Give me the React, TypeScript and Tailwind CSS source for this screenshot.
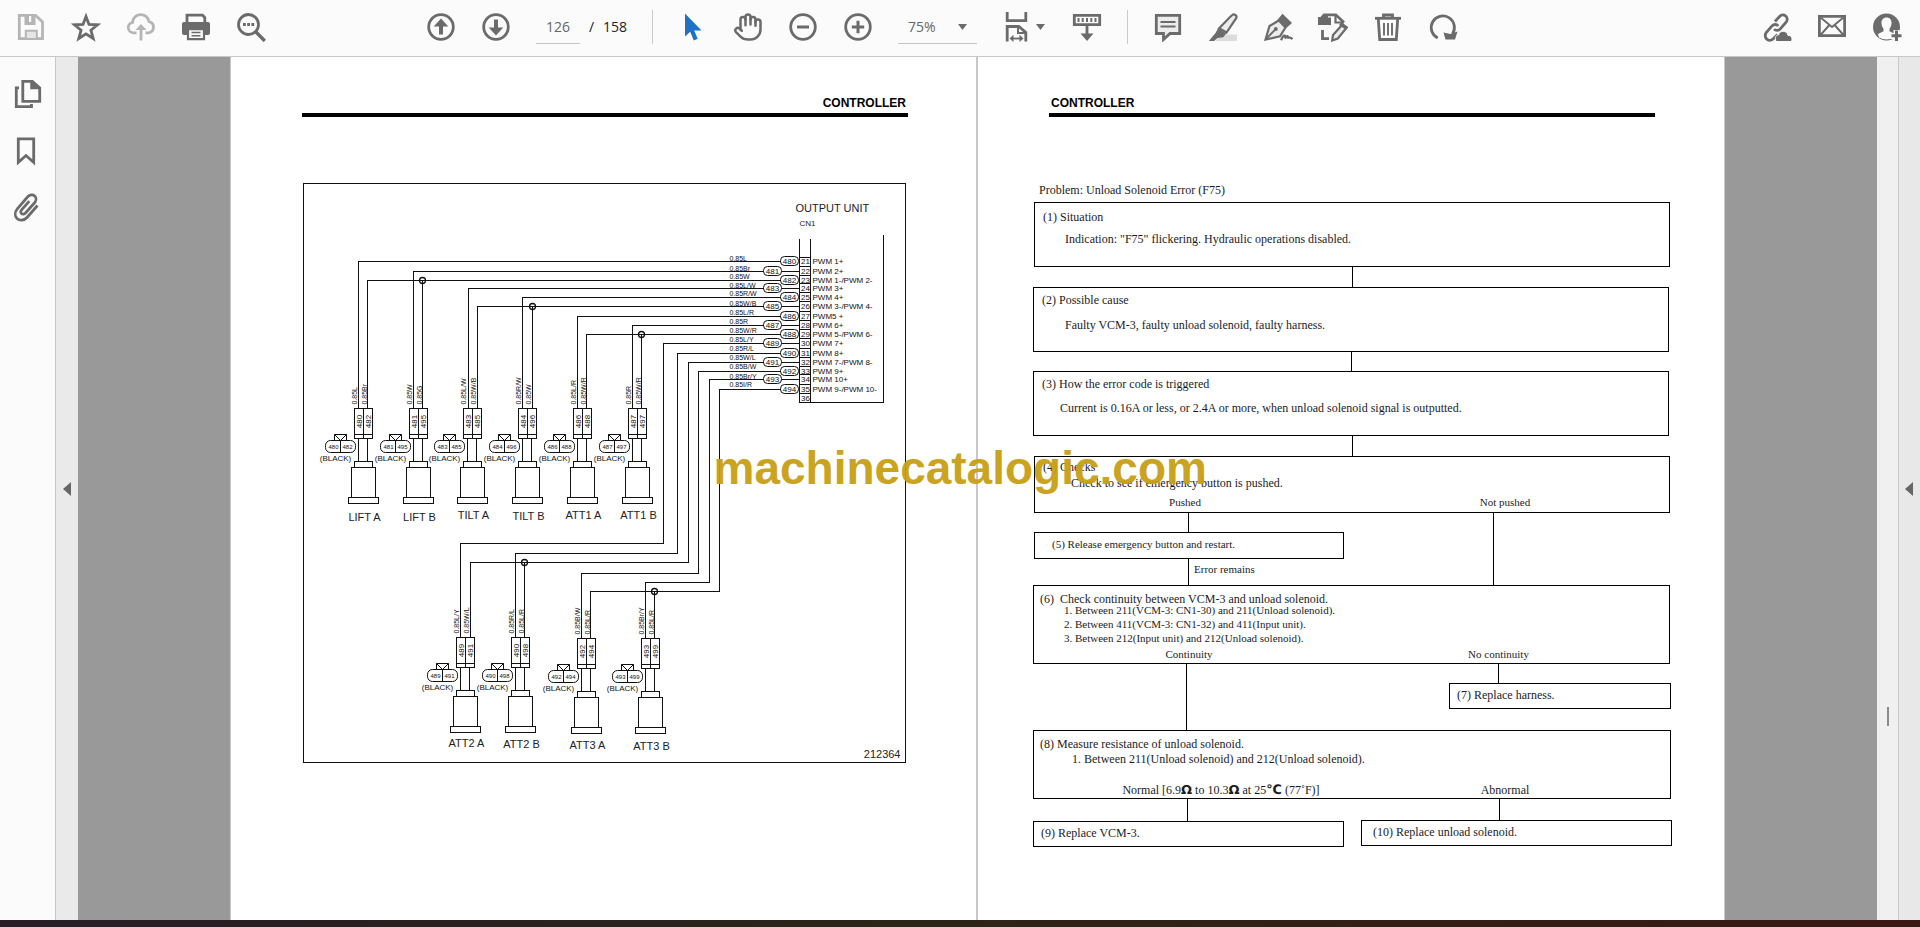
import type { ReactNode } from 'react';
import { Hand } from 'lucide-react';

interface IconButtonProps {
  label: string;
  children: ReactNode;
  className?: string;
}

function IconButton({ label, children, className = 'text-[#6b6b6b]' }: IconButtonProps) {
  return (
    <button type="button" aria-label={label} title={label} className={`flex h-[30px] w-[30px] shrink-0 items-center justify-center ${className}`}>
      {children}
    </button>
  );
}

function Icon({ children }: { children: ReactNode }) {
  return (
    <svg viewBox="0 0 30 30" className="h-[30px] w-[30px]" fill="none" stroke="currentColor" strokeWidth="2.8" aria-hidden="true">
      {children}
    </svg>
  );
}

function Caret() {
  return (
    <svg viewBox="0 0 9 6" className="h-[6px] w-[9px] fill-[#6b6b6b]" aria-hidden="true">
      <path d="M0 0h9L4.5 6z" />
    </svg>
  );
}

function Toolbar() {
  return (
    <header className="flex h-[57px] shrink-0 items-center border-b border-[#c8c8c8] bg-[#fbfbfb] pr-[18px] pb-[2px] pl-4">
      <div className="flex items-center gap-[25px]">
        <IconButton label="Save" className="text-[#b5b5b5]">
          <Icon>
            <path d="M3.3 3.3h16.2l7 6.6v16.8H3.3z" />
            <path d="M8.5 4h11v9h-11z" fill="currentColor" stroke="none" />
            <path d="M13 4h2.2v6H13z" fill="#fbfbfb" stroke="none" />
            <path d="M9.8 26v-7.2h11V26" fill="#e6e6e6" strokeWidth="2" />
          </Icon>
        </IconButton>
        <IconButton label="Star">
          <Icon>
            <path d="M15 4.500l3 7.900 8.600.400-6.700 5.400 2.300 8.300-7.200-4.700-7.200 4.700 2.300-8.300-6.700-5.400 8.600-.400z" />
          </Icon>
        </IconButton>
        <IconButton label="Upload to cloud" className="text-[#b5b5b5]">
          <Icon>
            <path d="M10.500 20.800H7.300a5.200 5.200 0 0 1-.8-10.300A8.300 8.300 0 0 1 23 9.600a5.700 5.700 0 0 1-.3 11.200h-3.200" />
            <path d="M15 28.500V16" />
            <path d="M15 12l5.500 6h-11z" fill="currentColor" stroke="none" />
          </Icon>
        </IconButton>
        <IconButton label="Print">
          <Icon>
            <path d="M6 11V3.200h15.500L23.800 5.500V11" />
            <path d="M3 10h24a2 2 0 0 1 2 2v9a2 2 0 0 1-2 2H3a2 2 0 0 1-2-2v-9a2 2 0 0 1 2-2z" fill="currentColor" stroke="none" />
            <path d="M7 17.200h16v10H7z" fill="#fbfbfb" strokeWidth="2.200" />
            <path d="M10.500 20.500h9M10.500 23.800h9" strokeWidth="1.600" />
          </Icon>
        </IconButton>
        <IconButton label="Find text">
          <Icon>
            <circle cx="12.500" cy="12.500" r="10" />
            <path d="M19.500 19.500l9.300 9.500" strokeWidth="3.400" />
            <path d="M7 12.500h2.800M11.200 12.500h2.800M15.400 12.500h2.800" />
          </Icon>
        </IconButton>
      </div>

      <div className="ml-40 flex items-center gap-[25px]">
        <IconButton label="Previous page">
          <Icon>
            <circle cx="15" cy="15" r="12.300" />
            <path d="M15 6.500l7.300 8h-5.300v8h-4v-8H7.700z" fill="currentColor" stroke="none" />
          </Icon>
        </IconButton>
        <IconButton label="Next page">
          <Icon>
            <circle cx="15" cy="15" r="12.300" />
            <path d="M15 23.500l7.300-8h-5.300v-8h-4v8H7.700z" fill="currentColor" stroke="none" />
          </Icon>
        </IconButton>
        <div className="flex items-center gap-[9px] text-sm">
          <input aria-label="Page number" defaultValue="126" className="h-[34px] w-11 border-b border-[#c4c4c4] bg-transparent text-center text-[#666] outline-none" />
          <span className="flex w-[38px] justify-between text-[#222]">
            <span>/</span>
            <span>158</span>
          </span>
        </div>
        <div className="h-[34px] w-px bg-[#c9c9c9]" />
        <IconButton label="Select tool" className="text-[#1f70c8]">
          <Icon>
            <path d="M7 1.500v23l5.200-4.700 3.600 8.600 3.900-1.700-3.500-8.200H23.500z" fill="currentColor" stroke="none" />
          </Icon>
        </IconButton>
        <IconButton label="Hand tool">
          <Hand size={30} strokeWidth={2} />
        </IconButton>
        <IconButton label="Zoom out">
          <Icon>
            <circle cx="15" cy="15" r="12.300" />
            <path d="M9 15h12" strokeWidth="3" />
          </Icon>
        </IconButton>
        <IconButton label="Zoom in">
          <Icon>
            <circle cx="15" cy="15" r="12.300" />
            <path d="M8.800 15h12.400M15 8.800v12.400" strokeWidth="3" />
          </Icon>
        </IconButton>
        <div className="relative flex w-[79px] items-center border-b border-[#c4c4c4]">
          <select aria-label="Zoom level" defaultValue="75%" className="h-[33px] w-full appearance-none bg-transparent pl-2.5 text-sm text-[#666] outline-none">
            <option>50%</option>
            <option>75%</option>
            <option>100%</option>
          </select>
          <span className="pointer-events-none absolute right-2.5">
            <Caret />
          </span>
        </div>
        <button type="button" aria-label="Page display" className="flex w-[45px] items-center gap-1 text-[#6b6b6b]">
          <Icon>
            <path d="M5.200 0v8.700h18.600V0" />
            <path d="M5.200 29.500V14.500h11.600l7 6v9" />
            <path d="M16 14.500v6.500h7.500" strokeWidth="2" />
            <path d="M9 26.500h11" strokeWidth="1.800" />
            <path d="M11.500 22.700v7.300L7.500 26.400zM17.500 22.700v7.300l4-3.600z" fill="currentColor" stroke="none" />
          </Icon>
          <Caret />
        </button>
        <IconButton label="Scrolling mode">
          <Icon>
            <path d="M2.300 3.300h25.400v9.400H2.300z" />
            <path d="M6.500 6v4M10.700 6v4M15 6v4M19.300 6v4M23.500 6v4" strokeWidth="2" />
            <path d="M15 13v10" />
            <path d="M8.500 21.500h13L15 29z" fill="currentColor" stroke="none" />
          </Icon>
        </IconButton>
        <div className="h-[34px] w-px bg-[#c9c9c9]" />
        <IconButton label="Add comment">
          <Icon>
            <path d="M3.300 3.300h23.400v18.200H17l-6.500 6v-6H3.300z" fill="#ececec" />
            <path d="M7.500 10h15M7.500 14.500h15" strokeWidth="2" />
          </Icon>
        </IconButton>
        <IconButton label="Highlight text">
          <Icon>
            <path d="M13 22.500h16V29H7z" fill="#dcdcdc" stroke="none" />
            <path d="M24 3.300c2-2 5.500.2 4.200 2.900L18.500 20.500l-7.300-4.200C15.500 12 20 7 24 3.300z" fill="#ececec" strokeWidth="2.200" />
            <path d="M10 16.500L18.300 21.300l-3 4-5.800.7L6 29H.8l6.700-8z" fill="currentColor" stroke="none" />
          </Icon>
        </IconButton>
        <IconButton label="Sign">
          <Icon>
            <path d="M2.500 27.500L6.500 14l9.300-5.500 6.700 7-5.500 8.800z" fill="#ececec" strokeWidth="2.200" />
            <path d="M2.500 27.500l9.500-9.700" strokeWidth="1.800" />
            <circle cx="12.800" cy="17" r="2" fill="currentColor" stroke="none" />
            <path d="M14.500 7.800l5-6L29 11l-6 5.200z" fill="currentColor" stroke="none" />
            <path d="M18 28.300c2.500-5.500 4.500-6.500 4.300-1.800 1.600-3.500 2.800-3 2.800 0 .8-1.600 2.400-1.300 4.400.6" strokeWidth="2.200" />
          </Icon>
        </IconButton>
        <IconButton label="Edit document">
          <Icon>
            <path d="M4.500 18v8.700H11M10 2.800h7.800L26 10.500" />
            <path d="M5.500 1.500H10v4h3V13H0V5h2.500z" fill="currentColor" stroke="none" />
            <path d="M17.500 3v7.500H26" strokeWidth="2.200" />
            <path d="M24.500 12.500l4.300 3-9 11-5.600 2 .8-5.500z" fill="#ececec" strokeWidth="2.200" />
            <path d="M23 10.500l6.800 4.500-2 2.800-6.800-4.800z" fill="currentColor" stroke="none" />
          </Icon>
        </IconButton>
        <IconButton label="Delete">
          <Icon>
            <path d="M2 6.300h26" />
            <path d="M10.500 6V3h9v3" />
            <path d="M5.300 7l1.400 20.500h16.600L24.700 7" />
            <path d="M11 11v12.500M15 11v12.500M19 11v12.500" strokeWidth="1.900" />
          </Icon>
        </IconButton>
        <IconButton label="Rotate">
          <Icon>
            <path d="M9.700 26A11.600 11.600 0 1 1 24.500 22" />
            <path d="M15.500 20.500l7 1.500 7-2.500-2.500 8H17.500z" fill="currentColor" stroke="none" />
          </Icon>
        </IconButton>
      </div>

      <div className="ml-auto flex items-center gap-[25px]">
        <IconButton label="Copy link">
          <Icon>
            <path d="M13 9.500l4.800-5.300a4.300 4.300 0 0 1 6.500 5.600l-6 7a4.200 4.200 0 0 1-6.300.3" />
            <path d="M15.500 22.500l-3.800 3.900a4.700 4.700 0 0 1-7.500-5.700l5.600-6.500a4.200 4.200 0 0 1 6.500-.3" />
            <path d="M14 29.500c-1.500-4 0-7 2.500-6.500 1-5 8.500-5 9.500.5 4-.5 5 4.500 3 6z" fill="currentColor" stroke="#fbfbfb" strokeWidth="1" />
          </Icon>
        </IconButton>
        <IconButton label="Send by email">
          <Icon>
            <path d="M2.400 4.400h25.200v19.200H2.400z" />
            <path d="M3 5l12 10L27 5M3 23.500l9-10M27 23.500l-9-10" strokeWidth="1.900" />
          </Icon>
        </IconButton>
        <IconButton label="Add people">
          <Icon>
            <circle cx="14.500" cy="15" r="13.500" fill="currentColor" stroke="none" />
            <path d="M14.500 5.500c3.600 0 5.300 2.700 5 6-.2 2.400-1 4-2 5.200v2.500l5.500 2.800-1 3.500c-4.500 2.500-10.500 2.500-15 0L6 22l5.500-2.800v-2.500c-1-1.200-1.800-2.800-2-5.200-.3-3.300 1.400-6 5-6z" fill="#fbfbfb" stroke="none" />
            <path d="M24.500 18v12M18.500 24h12" stroke="#fbfbfb" strokeWidth="6" />
            <path d="M24.500 18.500V29M19.500 23.800h10" strokeWidth="3" />
          </Icon>
        </IconButton>
      </div>
    </header>
  );
}

function Sidebar() {
  return (
    <nav className="flex w-14 shrink-0 flex-col items-center gap-[27px] border-r border-[#c8c8c8] bg-[#fbfbfb] pt-[22px]">
      <IconButton label="Page thumbnails">
        <Icon>
          <path d="M9.800 2.300h9.600l7.300 6.500v13.500H9.800z" />
          <path d="M18 3v6.500h8z" fill="currentColor" strokeWidth="1.500" />
          <path d="M6 8.800H3.300v18.900h15.200V25" />
        </Icon>
      </IconButton>
      <IconButton label="Bookmarks">
        <Icon>
          <path d="M5.300 2.800h15.400v23.500L13 19.500l-7.700 6.800z" />
        </Icon>
      </IconButton>
      <IconButton label="Attachments">
        <Icon>
          <path d="M24.500 12.500L14 24.500c-3 3.300-7.500 3.500-10 1-2.600-2.600-2-6.800.5-9.800L14.500 4c2.200-2.400 5.300-2.800 7.200-1 2 1.900 1.500 4.900-.3 7L12.500 20c-1.300 1.400-3 1.600-4 .6-1.100-1.100-.8-2.700.3-4l7.500-8.500" strokeWidth="2.700" />
        </Icon>
      </IconButton>
    </nav>
  );
}

// wires from the CN1 connector, top to bottom
interface Wire {
  y: number;
  color: string;
  labelY: number;
  no: string;
  pin: string;
  signal: string;
}

const wires: Wire[] = [
  { y: 261, color: '0.85L', labelY: 260, no: '480', pin: '21', signal: 'PWM 1+' },
  { y: 271, color: '0.85Br', labelY: 270, no: '481', pin: '22', signal: 'PWM 2+' },
  { y: 280, color: '0.85W', labelY: 278, no: '482', pin: '23', signal: 'PWM 1-/PWM 2-' },
  { y: 288, color: '0.85L/W', labelY: 287, no: '483', pin: '24', signal: 'PWM 3+' },
  { y: 297, color: '0.85R/W', labelY: 295, no: '484', pin: '25', signal: 'PWM 4+' },
  { y: 306, color: '0.85W/B', labelY: 305, no: '485', pin: '26', signal: 'PWM 3-/PWM 4-' },
  { y: 316, color: '0.85L/R', labelY: 314, no: '486', pin: '27', signal: 'PWM5 +' },
  { y: 325, color: '0.85R', labelY: 323, no: '487', pin: '28', signal: 'PWM 6+' },
  { y: 334, color: '0.85W/R', labelY: 332, no: '488', pin: '29', signal: 'PWM 5-/PWM 6-' },
  { y: 343, color: '0.85L/Y', labelY: 341, no: '489', pin: '30', signal: 'PWM 7+' },
  { y: 353, color: '0.85R/L', labelY: 350, no: '490', pin: '31', signal: 'PWM 8+' },
  { y: 362, color: '0.85W/L', labelY: 359, no: '491', pin: '32', signal: 'PWM 7-/PWM 8-' },
  { y: 371, color: '0.85B/W', labelY: 368, no: '492', pin: '33', signal: 'PWM 9+' },
  { y: 379, color: '0.85Br/Y', labelY: 378, no: '493', pin: '34', signal: 'PWM 10+' },
  { y: 389, color: '0.85I/R', labelY: 386, no: '494', pin: '35', signal: 'PWM 9-/PWM 10-' },
];

// start x of each run, then where it goes
const routes = [
  'M358 408V261H780',
  'M413 408V271H763',
  'M367 408V280H780M422 280V408',
  'M468 408V288H763',
  'M522 408V297H780',
  'M477 408V306H763M532 306V408',
  'M577 408V316H780',
  'M632 408V325H763',
  'M586 408V334H780M641 334V408',
  'M460 637V543H663V343H763',
  'M515 637V553H677V353H780',
  'M470 637V562H688V362H763M524 562V637',
  'M581 638V573H698V371H780',
  'M645 638V582H709V379H763',
  'M590 638V591H719V389H780M654 591V638',
];

const junctions = [[422, 280], [532, 306], [641, 334], [524, 562], [654, 591]];

interface Solenoid {
  name: string;
  x: number;
  y: number;
  nameY: number;
  pins: [string, string];
  colors: [string, string];
}

const solenoids: Solenoid[] = [
  { name: 'LIFT A', x: 363, y: 408, nameY: 520, pins: ['480', '482'], colors: ['0.85L', '0.85Br'] },
  { name: 'LIFT B', x: 418, y: 408, nameY: 520, pins: ['481', '495'], colors: ['0.85W', '0.85G'] },
  { name: 'TILT A', x: 472, y: 408, nameY: 518, pins: ['483', '485'], colors: ['0.85L/W', '0.85W/B'] },
  { name: 'TILT B', x: 527, y: 408, nameY: 519, pins: ['484', '496'], colors: ['0.85R/W', '0.85W'] },
  { name: 'ATT1 A', x: 582, y: 408, nameY: 518, pins: ['486', '488'], colors: ['0.85L/R', '0.85W/R'] },
  { name: 'ATT1 B', x: 637, y: 408, nameY: 518, pins: ['487', '497'], colors: ['0.85R', '0.85W/R'] },
  { name: 'ATT2 A', x: 465, y: 637, nameY: 746, pins: ['489', '491'], colors: ['0.85L/Y', '0.85W/L'] },
  { name: 'ATT2 B', x: 520, y: 637, nameY: 747, pins: ['490', '498'], colors: ['0.85R/L', '0.85L/R'] },
  { name: 'ATT3 A', x: 586, y: 638, nameY: 748, pins: ['492', '494'], colors: ['0.85B/W', '0.85L/R'] },
  { name: 'ATT3 B', x: 650, y: 638, nameY: 749, pins: ['493', '499'], colors: ['0.85Br/Y', '0.85L/R'] },
];

function SolenoidSymbol({ x, y, name, nameY, pins, colors }: Solenoid) {
  return (
    <g>
      <g transform={`translate(${x} ${y})`}>
        <g fill="none" stroke="#111" shapeRendering="crispEdges">
          <path d="M-9 0h18v30h-18zM0 0v30M-9 26h18" />
          <path d="M-5 30v23M4 30v23" />
          <path d="M-9 53h18v6h-18zM-12 59h24v30h-24zM-15 89h30v6h-30z" />
        </g>
        <g fill="none" stroke="#111">
          <rect x="-38" y="32" width="30" height="12" rx="5" />
          <path d="M-23 32v12M-29 26h12v6h-12zM-29 26l6 6 6-6" />
        </g>
        <g fill="#111">
          <text x="-30" y="40" fontSize="6" textAnchor="middle">{pins[0]}</text>
          <text x="-16" y="40" fontSize="6" textAnchor="middle">{pins[1]}</text>
          <text x="-28" y="52" fontSize="8" textAnchor="middle">(BLACK)</text>
          <text transform="translate(-2 13) rotate(-90)" fontSize="8" textAnchor="middle">{pins[0]}</text>
          <text transform="translate(7 13) rotate(-90)" fontSize="8" textAnchor="middle">{pins[1]}</text>
          <text transform="translate(-7 -4) rotate(-90)" fontSize="7">{colors[0]}</text>
          <text transform="translate(3 -4) rotate(-90)" fontSize="7">{colors[1]}</text>
        </g>
      </g>
      <text x={x + 1} y={nameY} fontSize="11" textAnchor="middle" fill="#222">{name}</text>
    </g>
  );
}

function WiringDiagram() {
  return (
    <svg viewBox="303.5 183.5 601 578" className="block h-auto w-full font-['Liberation_Sans',Arial,sans-serif]" role="img" aria-label="Output unit wiring">
      <text x="795" y="211" fontSize="11" fill="#222">OUTPUT UNIT</text>
      <text x="799" y="225" fontSize="8" fill="#222">CN1</text>

      <g fill="none" stroke="#111" shapeRendering="crispEdges">
        {routes.map((d) => (
          <path key={d} d={d} />
        ))}
        <path d="M799 238V402H883V234M810 238V402" />
        <path d="M799 257h11M799 393h11" />
      </g>

      {junctions.map(([x, y]) => (
        <circle key={x} cx={x} cy={y} r="3" fill="none" stroke="#111" strokeWidth="1.3" />
      ))}

      {wires.map((w, i) => {
        const left = i % 2 === 0 ? 780 : 763;
        return (
          <g key={w.no}>
            <g fill="none" stroke="#111">
              {i % 2 === 1 && <path d={`M781 ${w.y}H799`} />}
              <rect x={left} y={w.y - 5} width="18" height="9" rx="4" />
              {i > 0 && <path d={`M799 ${w.y - 5}h11`} />}
            </g>
            <g fill="#111" fontSize="8">
              <text x={left + 9} y={w.y + 2} textAnchor="middle">{w.no}</text>
              <text x="805" y={w.y + 2} textAnchor="middle">{w.pin}</text>
              <text x="812" y={w.y + 2}>{w.signal}</text>
              <text x="729" y={w.labelY} fontSize="7">{w.color}</text>
            </g>
          </g>
        );
      })}
      <text x="805" y="400" fontSize="8" textAnchor="middle" fill="#111">36</text>

      {solenoids.map((s) => (
        <SolenoidSymbol key={s.name} {...s} />
      ))}
      <text x="900" y="757" fontSize="11" textAnchor="end" fill="#222">212364</text>
    </svg>
  );
}

function FlowBox({ children, className = '' }: { children: ReactNode; className?: string }) {
  return <div className={`border border-black ${className}`}>{children}</div>;
}

function Connector({ className }: { className: string }) {
  return <div className={`w-px shrink-0 bg-black ${className}`} />;
}

function Unit({ children }: { children: ReactNode }) {
  return <b className="text-[13px] font-['DejaVu_Sans',sans-serif]">{children}</b>;
}

function FlowChart() {
  return (
    <div className="ml-[55px] w-[638px] text-[12px] leading-4 text-[#1c1c1c] font-['Liberation_Serif','Times_New_Roman',serif]">
      <p className="pl-[6px]">Problem: Unload Solenoid Error (F75)</p>

      <FlowBox className="mt-1 ml-px h-[65px] w-[636px] pt-[6px] pl-2">
        <p>(1) Situation</p>
        <p className="mt-[6px] pl-[22px]">Indication: "F75" flickering. Hydraulic operations disabled.</p>
      </FlowBox>
      <Connector className="ml-[319px] h-5" />

      <FlowBox className="h-[65px] w-[636px] pt-1 pl-2">
        <p>(2) Possible cause</p>
        <p className="mt-[9px] pl-[23px]">Faulty VCM-3, faulty unload solenoid, faulty harness.</p>
      </FlowBox>
      <Connector className="ml-[318px] h-[19px]" />

      <FlowBox className="h-[65px] w-[636px] pt-1 pl-2">
        <p>(3) How the error code is triggered</p>
        <p className="mt-2 pl-[18px]">Current is 0.16A or less, or 2.4A or more, when unload solenoid signal is outputted.</p>
      </FlowBox>
      <Connector className="ml-[319px] h-5" />

      <FlowBox className="ml-px h-[57px] w-[636px] pt-[2px]">
        <p className="pl-2">(4) Checks</p>
        <p className="pl-9">Check to see if emergency button is pushed.</p>
        <div className="mt-[3px] flex text-center text-[11px]">
          <span className="w-[300px]">Pushed</span>
          <span className="ml-[6px] flex-1">Not pushed</span>
        </div>
      </FlowBox>
      <div className="flex text-[11px]">
        <div className="w-[460px]">
          <Connector className="ml-[155px] h-[19px]" />
          <FlowBox className="ml-px h-[27px] w-[310px] pt-[3px] pl-[17px]">(5) Release emergency button and restart.</FlowBox>
          <div className="ml-[155px] flex h-[26px] gap-[5px]">
            <Connector className="h-full" />
            <span className="pt-[2px]">Error remains</span>
          </div>
        </div>
        <Connector className="self-stretch" />
      </div>

      <FlowBox className="h-[79px] w-[637px] pt-[5px]">
        <p className="pl-[6px] whitespace-pre">(6)  Check continuity between VCM-3 and unload solenoid.</p>
        <ol className="-mt-1 pl-[30px] text-[11px] leading-[14px]">
          <li>1. Between 211(VCM-3: CN1-30) and 211(Unload solenoid).</li>
          <li>2. Between 411(VCM-3: CN1-32) and 411(Input unit).</li>
          <li>3. Between 212(Input unit) and 212(Unload solenoid).</li>
        </ol>
        <div className="mt-px flex text-center text-[11px]">
          <span className="w-[310px]">Continuity</span>
          <span className="w-[309px]">No continuity</span>
        </div>
      </FlowBox>
      <div className="flex">
        <Connector className="ml-[153px] h-[66px]" />
        <div className="ml-[262px]">
          <Connector className="ml-[49px] h-[19px]" />
          <FlowBox className="h-[26px] w-[222px] pt-[3px] pl-[7px]">(7) Replace harness.</FlowBox>
        </div>
      </div>

      <FlowBox className="h-[69px] w-[638px] pt-[5px]">
        <p className="pl-[6px]">(8) Measure resistance of unload solenoid.</p>
        <p className="-mt-px pl-[38px]">1. Between 211(Unload solenoid) and 212(Unload solenoid).</p>
        <div className="mt-[15px] flex h-4 text-center">
          <span className="w-[374px]">
            Normal [6.9<Unit>Ω</Unit> to 10.3<Unit>Ω</Unit> at 25<Unit>℃</Unit> (77˚F)]
          </span>
          <span className="w-[194px]">Abnormal</span>
        </div>
      </FlowBox>
      <div className="flex gap-[17px]">
        <div>
          <Connector className="ml-[154px] h-[22px]" />
          <FlowBox className="h-[26px] w-[311px] pt-[3px] pl-[7px]">(9) Replace VCM-3.</FlowBox>
        </div>
        <div>
          <Connector className="ml-[138px] h-[21px]" />
          <FlowBox className="h-[26px] w-[311px] pt-[3px] pl-[11px]">(10) Replace unload solenoid.</FlowBox>
        </div>
      </div>
    </div>
  );
}

export default function App() {
  return (
    <div className="flex h-screen flex-col overflow-hidden font-['Open_Sans','Noto_Sans',sans-serif]">
      <Toolbar />

      <div className="flex min-h-0 flex-1">
        <Sidebar />
        <button type="button" aria-label="Collapse sidebar" className="flex w-[22px] shrink-0 items-center justify-center bg-[#eaeaea]">
          <svg viewBox="0 0 8 14" className="h-[14px] w-2 fill-[#666]" aria-hidden="true">
            <path d="M8 0v14L0 7z" />
          </svg>
        </button>

        <main className="relative flex min-w-0 flex-1 justify-center bg-[#999]">
          <section className="w-[746px] shrink-0 border-l border-[#c8c8c8] bg-white pt-[38px] font-['Liberation_Sans',Arial,sans-serif]">
            <div className="mr-[68px] ml-[71px]">
              <h2 className="pr-[2px] text-right text-xs font-bold">CONTROLLER</h2>
              <div className="mt-[2px] h-1 bg-black" />
              <div className="mt-[66px] mr-[2px] ml-px border border-[#111]">
                <WiringDiagram />
              </div>
            </div>
          </section>
          <section className="w-[749px] shrink-0 border-r border-l-2 border-[#c8c8c8] bg-white pt-[38px]">
            <div className="mr-[69px] ml-[71px] font-['Liberation_Sans',Arial,sans-serif]">
              <h2 className="pl-[2px] text-xs font-bold">CONTROLLER</h2>
              <div className="mt-[2px] mb-[65px] h-1 bg-black" />
            </div>
            <FlowChart />
          </section>
          <p className="pointer-events-none absolute top-[385px] left-1/2 -ml-[264px] text-[46px] leading-[52px] font-bold whitespace-nowrap text-[#c8a016] opacity-95 font-['Liberation_Sans',Arial,sans-serif]">
            machinecatalogic.com
          </p>
        </main>

        <div className="w-[21px] shrink-0 bg-[#f0f0f0] pt-[650px]">
          <div className="mx-auto h-[19px] w-[2px] bg-[#8a8a8a]" />
        </div>
        <button type="button" aria-label="Expand tools" className="flex w-[22px] shrink-0 items-center justify-center border-l border-[#c8c8c8] bg-[#e8e8e8] pr-[2px]">
          <svg viewBox="0 0 8 14" className="h-[14px] w-2 fill-[#666]" aria-hidden="true">
            <path d="M8 0v14L0 7z" />
          </svg>
        </button>
      </div>

      <footer className="h-[7px] shrink-0 bg-linear-to-r from-[#281d26] via-[#2d2418] to-[#3a1814]" />
    </div>
  );
}
